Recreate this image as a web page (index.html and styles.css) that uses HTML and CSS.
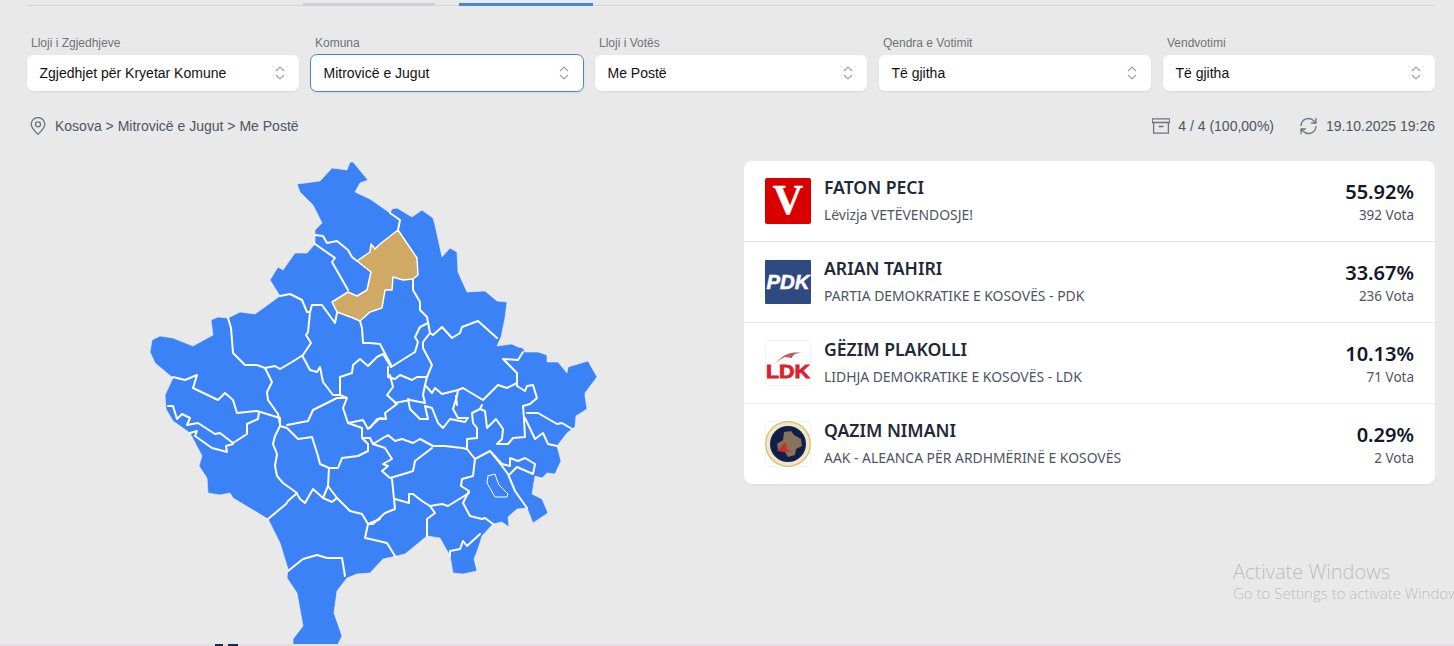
FILE: index.html
```html
<!DOCTYPE html>
<html lang="sq">
<head>
<meta charset="utf-8">
<title>Rezultatet</title>
<link rel="stylesheet" href="styles.css">
</head>
<body>
<div class="page">
  <nav class="tabs">
    <span class="tab tab-grey"></span>
    <span class="tab tab-blue"></span>
  </nav>

  <section class="filters">
    <div class="field">
      <label class="field-label">Lloji i Zgjedhjeve</label>
      <div class="select"><span>Zgjedhjet për Kryetar Komune</span><svg class="updown" viewBox="0 0 12 16"><path d="M2 6l4-4 4 4M2 10l4 4 4-4"/></svg></div>
    </div>
    <div class="field">
      <label class="field-label">Komuna</label>
      <div class="select select-focus"><span>Mitrovicë e Jugut</span><svg class="updown" viewBox="0 0 12 16"><path d="M2 6l4-4 4 4M2 10l4 4 4-4"/></svg></div>
    </div>
    <div class="field">
      <label class="field-label">Lloji i Votës</label>
      <div class="select"><span>Me Postë</span><svg class="updown" viewBox="0 0 12 16"><path d="M2 6l4-4 4 4M2 10l4 4 4-4"/></svg></div>
    </div>
    <div class="field">
      <label class="field-label">Qendra e Votimit</label>
      <div class="select"><span>Të gjitha</span><svg class="updown" viewBox="0 0 12 16"><path d="M2 6l4-4 4 4M2 10l4 4 4-4"/></svg></div>
    </div>
    <div class="field">
      <label class="field-label">Vendvotimi</label>
      <div class="select"><span>Të gjitha</span><svg class="updown" viewBox="0 0 12 16"><path d="M2 6l4-4 4 4M2 10l4 4 4-4"/></svg></div>
    </div>
  </section>

  <section class="status">
    <div class="crumb">
      <svg class="icon" viewBox="0 0 18 18"><path d="M9 17.300c-3.300-3.300-6.800-6.200-6.800-10a6.800 6.800 0 0 1 13.600 0c0 3.800-3.500 6.700-6.800 10z"/><circle cx="9" cy="7.300" r="2.500"/></svg>
      <span>Kosova &gt; Mitrovicë e Jugut &gt; Me Postë</span>
    </div>
    <div class="meta">
      <div class="meta-item">
        <svg class="icon" viewBox="0 0 18 18"><path d="M.3 1.800h17.400v3.700H.3zM1.600 5.500v10.700h14.800V5.500M7 9.500h4"/></svg>
        <span>4 / 4 (100,00%)</span>
      </div>
      <div class="meta-item">
        <svg class="icon" viewBox="0 0 18 18"><path d="M1 8.500A7.500 7.500 0 0 1 14 4L16 6M16 1.500V6H11.500M16 9.500A7.500 7.500 0 0 1 3 14L1 12M1 16.500V12H5.500"/></svg>
        <span>19.10.2025 19:26</span>
      </div>
    </div>
  </section>

  <main class="content">
    <svg class="map" viewBox="27 161 717 485">
      <path class="region" d="M297 184 320 181 332 168 347 170 350 162 353 162 368 180 360 183 355 192 370 199 390 213 392 209 397 208 412 217 422 210 433 218 435 225 442 257 450 248 457 252 458 272 467 292 485 291 497 301 507 302 505 318 501 337 497 346 512 344 518 347 523 348 525 352 538 352 547 355 547 362 558 362 567 373 568 367 588 361 597 377 585 393 585 396 587 409 576 416 575 427 567 433 557 446 561 461 555 474 547 473 542 478 535 476 532 494 542 499 548 513 533 523 527 508 517 509 508 517 509 527 502 522 493 524 482 536 478 549 474 559 477 571 463 574 453 573 450 556 440 538 427 536 405 554 383 559 370 573 357 574 347 578 337 591 334 613 342 636 337 646 293 646 293 639 303 626 297 593 287 578 288 569 280 543 268 519 233 498 230 493 220 495 208 493 207 478 199 466 202 456 190 433 173 421 166 409 165 395 173 378 155 363 150 352 152 340 160 336 173 338 183 342 193 346 213 335 211 320 218 317 228 318 240 312 255 314 280 296 270 280 278 267 283 270 295 253 307 253 315 244 315 230 322 223 313 205 300 192z"/>
      <path class="gold" d="M332 302 348 292 357 296 367 290 371 272 357 261 370 252 371 244 375 249 380 244 398 230 417 258 418 275 413 279 403 280 393 277 392 290 385 290 382 308 370 312 360 321 353 318 337 312z"/>
      <g class="borders">
        <polyline points="315,235 323,236 327,243 337,241 348,250 352,257 357,261"/>
        <polyline points="398,230 400,220 390,213"/>
        <polyline points="315,244 335,258 332,262 348,290"/>
        <polyline points="280,296 290,294 302,300 307,312 310,312 312,305 322,305 335,323 337,313"/>
        <polyline points="310,312 308,332 306,335 311,343 303,355 292,362 280,369 275,366 265,368 257,365 245,365 233,353 231,328 228,318"/>
        <polyline points="265,368 272,382 267,392 268,400 278,414 280,424"/>
        <polyline points="303,357 310,370 317,372 320,367 323,382 333,395 340,395 347,398"/>
        <polyline points="340,395 340,377 352,373 353,365 360,359 368,366 377,357 383,354 391,367"/>
        <polyline points="360,321 362,328 363,343 370,343 380,344 391,365"/>
        <polyline points="413,279 413,290 420,302 420,310 427,317 430,333"/>
        <polyline points="428,323 420,327 415,337 418,342 415,352 391,367"/>
        <polyline points="430,333 423,342 423,348 432,365 427,377 417,377 412,380 400,375 395,379 388,377 388,367"/>
        <polyline points="430,333 433,335 442,327 452,338 460,333 462,327 478,321 497,338"/>
        <polyline points="523,352 518,360 503,359 517,373 517,386 525,391 527,386 533,385 537,398 530,404 523,406 524,419 525,437 513,438 508,444 497,444 502,439 503,429 496,419 487,428 485,411 480,409"/>
        <polyline points="517,383 507,388 498,385 483,400 463,388 458,390 442,394 435,388 432,393 425,385 427,377"/>
        <polyline points="458,390 457,396 453,409 458,418 468,418 465,422 450,419 443,428 438,423 432,408 425,406 428,419 420,419 410,409 408,399 410,400 425,403 423,395 425,385"/>
        <polyline points="390,375 393,387 387,395 397,404 385,413 386,419 377,419 370,428"/>
        <polyline points="395,403 410,400"/>
        <polyline points="482,405 480,409 472,413 473,423 477,428 477,438 467,439 467,449 475,459"/>
        <polyline points="370,438 373,444 388,435 395,441 402,439 413,443 420,439 433,446 445,446 462,448 467,449"/>
        <polyline points="527,413 538,413 557,424 562,423 572,429"/>
        <polyline points="525,418 535,439 543,433 548,444 557,446"/>
        <polyline points="475,459 490,451 502,466 508,474 515,491 527,508"/>
        <polyline points="490,451 502,464 510,466 510,458 518,461 525,458 535,464 533,474 517,467 510,474"/>
        <polyline points="475,459 473,476 462,479 461,486 469,491 463,503 470,516 482,519 485,518 493,524"/>
        <polyline points="469,493 448,506 442,504 430,506 422,501 413,494 409,494 409,503 395,499"/>
        <polyline points="392,479 395,509 385,513 373,524 368,524"/>
        <polyline points="382,471 390,478 407,473 413,471 415,461 432,448"/>
        <polyline points="382,471 388,466 383,464 392,459 385,448 373,444"/>
        <polyline points="430,506 435,513 427,519 427,536"/>
        <polyline points="450,556 450,551 460,549 463,541 467,546 480,534"/>
        <polyline points="173,377 185,380 197,375 193,388 218,400 225,393 233,400 237,413 257,411 280,418 280,426"/>
        <polyline points="168,406 173,406 177,419 182,414 190,418 187,425 198,423 215,434 220,433 233,443 247,434 247,424 258,419 259,412"/>
        <polyline points="190,433 197,431 195,436 212,448 227,452 226,446 233,444"/>
        <polyline points="280,426 275,436 273,444 277,454 275,466 277,476 283,483 297,493 288,501 286,504 268,519"/>
        <polyline points="297,494 300,499 305,503 313,489 323,498 328,486 337,498 332,502 323,498"/>
        <polyline points="337,498 350,511 362,514 368,524 380,519"/>
        <polyline points="368,524 365,538 370,539 387,543 395,556"/>
        <polyline points="328,486 329,468 320,464 318,456 312,437 298,439 287,428 280,426"/>
        <polyline points="287,425 308,421 313,410 337,398 347,398 343,408 348,423 362,428 362,438 370,438"/>
        <polyline points="329,468 338,468 342,458 358,456 368,451 368,444 362,438"/>
        <polyline points="348,423 363,420 368,429 380,418 386,419"/>
        <polyline points="288,571 303,559 317,555 327,558 342,558 345,576"/>
        <polyline points="457,405 456,396"/>
        <polyline class="lake" points="488,476 495,474 497,480 499,485 508,494 507,497 495,497 491,490 487,483 488,476"/>
      </g>
    </svg>

    <section class="results">
      <article class="row">
        <svg class="logo" viewBox="0 0 46 46"><rect width="46" height="46" rx="2" fill="#d90000"/><text class="logo-v" x="23" y="36" text-anchor="middle">V</text></svg>
        <div class="who"><h3 class="name">FATON PECI</h3><p class="party">Lëvizja VETËVENDOSJE!</p></div>
        <div class="score"><strong class="pct">55.92%</strong><span class="votes">392 Vota</span></div>
      </article>
      <article class="row">
        <svg class="logo" viewBox="0 0 46 46"><rect y="1" width="46" height="44" rx="1" fill="#2f4a80"/><text class="logo-pdk" x="23" y="30" text-anchor="middle" textLength="43" lengthAdjust="spacingAndGlyphs">PDK</text></svg>
        <div class="who"><h3 class="name">ARIAN TAHIRI</h3><p class="party">PARTIA DEMOKRATIKE E KOSOVËS - PDK</p></div>
        <div class="score"><strong class="pct">33.67%</strong><span class="votes">236 Vota</span></div>
      </article>
      <article class="row">
        <svg class="logo" viewBox="0 0 46 46"><defs><linearGradient id="swoosh" x1="0" y1="1" x2="1" y2="0"><stop offset="0" stop-color="#f4b4b4"/><stop offset=".55" stop-color="#e2494f"/><stop offset=".75" stop-color="#8a7070"/><stop offset="1" stop-color="#d0d0d0"/></linearGradient></defs><rect x=".5" y=".5" width="45" height="45" rx="3" fill="#fff" stroke="#f3f3f3"/><path d="M10 24C15 17 24 10 40 13 33 12 27 15 27 18l-7-1C16 19 13 21 10 24z" fill="url(#swoosh)"/><text class="logo-ldk" x="23" y="38" text-anchor="middle" textLength="44" lengthAdjust="spacingAndGlyphs">LDK</text></svg>
        <div class="who"><h3 class="name">GËZIM PLAKOLLI</h3><p class="party">LIDHJA DEMOKRATIKE E KOSOVËS - LDK</p></div>
        <div class="score"><strong class="pct">10.13%</strong><span class="votes">71 Vota</span></div>
      </article>
      <article class="row">
        <svg class="logo" viewBox="0 0 46 46"><rect x=".5" y=".5" width="45" height="45" rx="3" fill="#fff" stroke="#f3f3f3"/><circle cx="23" cy="23" r="22.300" fill="#efe6cc" stroke="#d9bb6a" stroke-width="1.200"/><circle cx="23" cy="23" r="18" fill="#0f1f45"/><path d="M19 11l7-1 3 4 7 4 1 7-6 3-1 6-7 2-3-5-7-2-1-6 6-4z" fill="#86735a"/><path d="M12 30l8-9 3 8 4 1-6 1z" fill="#c8322e"/></svg>
        <div class="who"><h3 class="name">QAZIM NIMANI</h3><p class="party">AAK - ALEANCA PËR ARDHMËRINË E KOSOVËS</p></div>
        <div class="score"><strong class="pct">0.29%</strong><span class="votes">2 Vota</span></div>
      </article>
    </section>
  </main>
</div>

<aside class="watermark">
  <div class="wm-title">Activate Windows</div>
  <div class="wm-sub">Go to Settings to activate Windows.</div>
</aside>
<div class="taskbar-edge"><span class="edge-blob"></span></div>
</body>
</html>
```

FILE: styles.css
```css
* { box-sizing: border-box; }

html, body {
  margin: 0;
  height: 646px;
  overflow: hidden;
  background: #e9e9e9;
}

body {
  font-family: "Liberation Sans", Arial, sans-serif;
  color: #111827;
}

.page {
  padding: 0 19px 0 27px;
}

.tabs {
  height: 6px;
  display: flex;
  align-items: flex-end;
  border-bottom: 1px solid #d5d5d7;
  margin-left: 1px;
  padding-left: 275px;
  gap: 24px;
}

.tab {
  display: block;
  height: 3px;
  margin-bottom: -1px;
}

.tab-grey { width: 132px; background: #d0d1d8; }
.tab-blue { width: 134px; background: #4a82dc; }

.filters {
  display: grid;
  grid-template-columns: repeat(5, 272px);
  column-gap: 12px;
  margin-top: 30px;
}

.field-label {
  display: block;
  font-size: 12px;
  line-height: 14px;
  color: #6f7278;
  margin: 0 0 5px 4px;
  height: 14px;
}

.select {
  height: 36px;
  display: flex;
  align-items: center;
  justify-content: space-between;
  padding: 0 13px 0 12.500px;
  background: #fff;
  border-radius: 6px;
  font-size: 14px;
  color: #111;
  box-shadow: 0 1px 2px rgba(0, 0, 0, .08);
}

.select-focus {
  height: 38px;
  margin: -1px 0 -1px -1px;
  width: 274px;
  border: 1px solid #4a82dc;
  border-radius: 7px;
}

.updown {
  width: 12px;
  height: 16px;
  fill: none;
  stroke: #9a9fa8;
  stroke-width: 1.200;
}

.status {
  display: flex;
  justify-content: space-between;
  align-items: center;
  margin-top: 25px;
  height: 20px;
  padding-left: 2px;
  font-size: 14px;
  color: #4b5563;
}

.crumb, .meta, .meta-item {
  display: flex;
  align-items: center;
}

.crumb { gap: 8px; }
.meta { gap: 26px; }
.meta-item { gap: 8px; }

.icon {
  width: 18px;
  height: 18px;
  fill: none;
  stroke: #6b7280;
  stroke-width: 1.300;
  stroke-linejoin: round;
  stroke-linecap: round;
}

.content {
  display: flex;
  align-items: flex-start;
  margin-top: 25px;
}

.map {
  display: block;
  flex: none;
  width: 717px;
  height: 485px;
}

.region {
  fill: #3b82f6;
  stroke: #eef1f5;
  stroke-width: .6;
  stroke-linejoin: round;
}

.gold {
  fill: #d0a964;
  stroke: #fff;
  stroke-width: 1.500;
  stroke-linejoin: round;
}

.borders polyline {
  fill: none;
  stroke: #fff;
  stroke-width: 2;
  stroke-linejoin: round;
  stroke-linecap: round;
}

.borders .lake { stroke-width: 1; }

.results {
  flex: 1;
  background: #fff;
  border-radius: 8px;
  box-shadow: 0 1px 2px rgba(0, 0, 0, .05);
  overflow: hidden;
}

.row {
  height: 81px;
  display: flex;
  align-items: flex-start;
  padding: 17px 21px 0 21px;
  border-bottom: 1px solid #e5e7eb;
  font-family: "Noto Sans", "Open Sans", sans-serif;
}

.row:last-child { height: 80px; border-bottom: 0; }

.logo {
  flex: none;
  width: 46px;
  height: 46px;
}

.logo-v {
  font: 700 42px "Liberation Serif", serif;
  fill: #fff;
  stroke: #fff;
  stroke-width: .5;
}

.logo-pdk {
  font: italic 700 20px "Liberation Sans", sans-serif;
  fill: #fff;
  stroke: #fff;
  stroke-width: .5;
}

.logo-ldk {
  font: 700 18px "Liberation Sans", sans-serif;
  fill: #d9232e;
  stroke: #d9232e;
  stroke-width: .8;
}

.who {
  flex: 1;
  margin-left: 13px;
  margin-top: -1px;
}

.name {
  margin: 0;
  font-size: 17.600px;
  line-height: 20px;
  font-weight: 600;
  color: #1f2937;
}

.party {
  margin: 9px 0 0;
  font-size: 13.900px;
  line-height: 18px;
  color: #4b5563;
}

.score {
  display: flex;
  flex-direction: column;
  align-items: flex-end;
  padding-top: 3px;
}

.pct {
  font-size: 20px;
  line-height: 22px;
  font-weight: 600;
  color: #111827;
}

.votes {
  margin-top: 3px;
  font-size: 13.500px;
  line-height: 18px;
  color: #4b5563;
}

.watermark {
  position: absolute;
  left: 1233px;
  top: 560px;
  width: 221px;
  overflow: hidden;
  white-space: nowrap;
  font-family: "Open Sans", sans-serif;
  font-weight: 300;
  color: #bdbdbd;
}

.wm-title { font-size: 20px; line-height: 23px; }
.wm-sub { font-size: 15px; line-height: 21px; }

.taskbar-edge {
  position: absolute;
  left: 0;
  right: 0;
  top: 644px;
  height: 2px;
  background: linear-gradient(90deg, #e2e0e2 0, #e2e0e2 27%, #e8dde2 27%, #e8dde2 100%);
}

.edge-blob {
  position: absolute;
  left: 215px;
  top: 0;
  width: 23px;
  height: 2px;
  background: linear-gradient(90deg, #1a2a50 0, #1a2a50 35%, transparent 35%, transparent 55%, #1a2a50 55%);
}
```
